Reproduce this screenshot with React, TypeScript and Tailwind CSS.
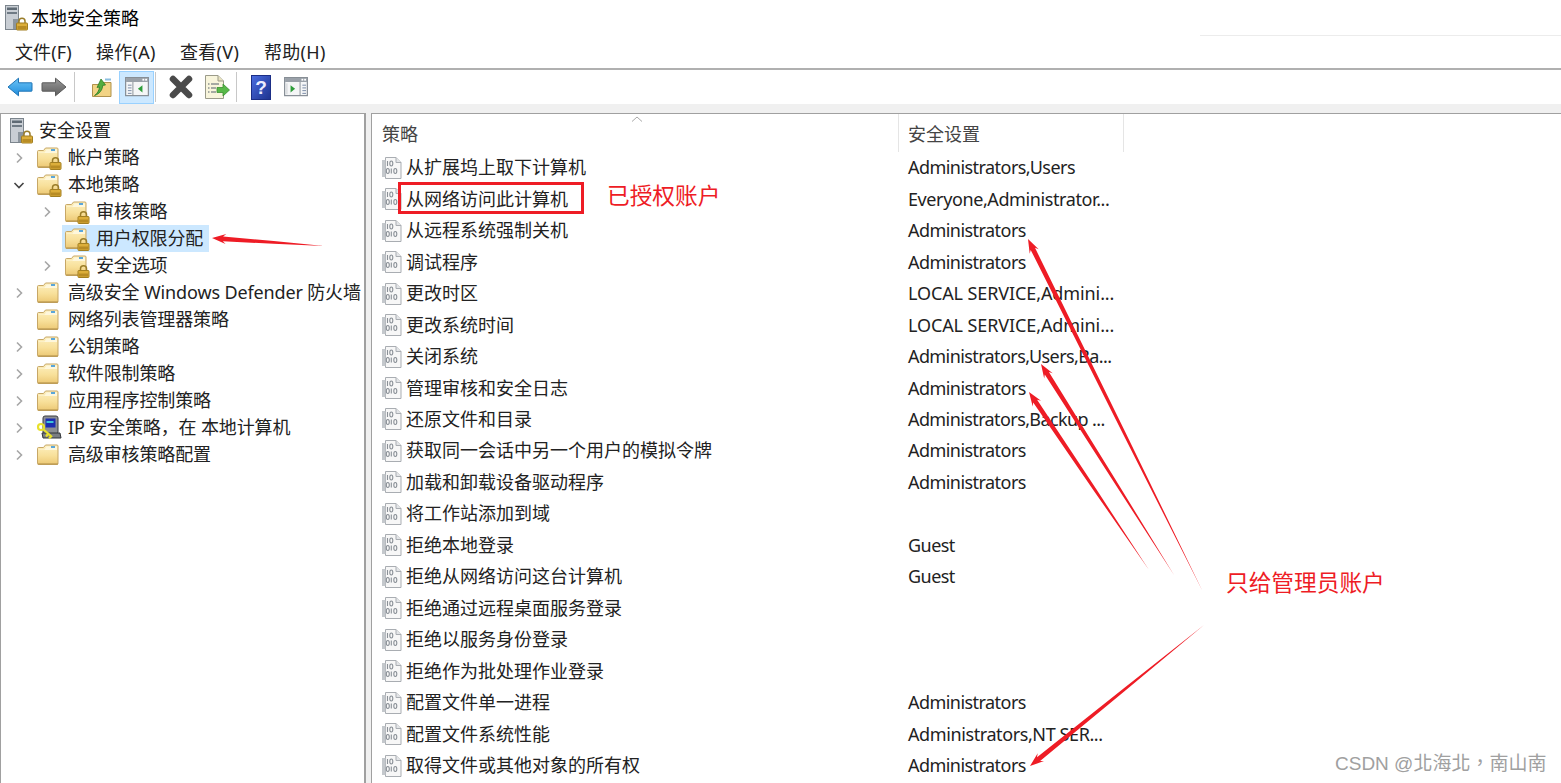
import React from "react";

const CJK = "font-['Noto_Sans','Noto_Sans_CJK_SC',sans-serif]";

function Defs() {
  return (
    <svg width="0" height="0" className="absolute">
      <defs>
        <linearGradient id="folderG" x1="0" y1="0" x2="0" y2="1">
          <stop offset="0" stopColor="#fdf0c0" />
          <stop offset=".55" stopColor="#f8e09a" />
          <stop offset="1" stopColor="#ecc874" />
        </linearGradient>
        <linearGradient id="blueG" x1="0" y1="0" x2="0" y2="1">
          <stop offset="0" stopColor="#6cc4f6" />
          <stop offset="1" stopColor="#1f8cdc" />
        </linearGradient>
        <linearGradient id="grayG" x1="0" y1="0" x2="0" y2="1">
          <stop offset="0" stopColor="#9a9a9a" />
          <stop offset="1" stopColor="#5e5e5e" />
        </linearGradient>
      </defs>
    </svg>
  );
}

function Lock({ x = 0, y = 0 }: { x?: number; y?: number }) {
  return (
    <g transform={`translate(${x} ${y})`}>
      <path d="M3 6V3.600C3 1.800 4.400 .8 6 .8s3 1 3 2.800V6" fill="none" stroke="#9a7d2a" strokeWidth="1.500" />
      <rect x=".5" y="5.500" width="11" height="7" rx=".8" fill="#dcae3a" stroke="#a27f22" />
      <rect x="1.500" y="8.500" width="9" height="3" fill="#b88c24" />
    </g>
  );
}

function ServerLock({ className = "" }: { className?: string }) {
  return (
    <svg width="26" height="26" viewBox="0 0 26 26" className={className}>
      <rect x="1.500" y=".5" width="13" height="24" fill="#c9ced4" stroke="#7c858d" />
      <rect x="3" y="2.500" width="10" height="2.500" fill="#5f6a74" />
      <rect x="3" y="7" width="10" height="2" fill="#6f7a84" />
      <rect x="9" y="14" width="5" height="10" fill="#8c959d" />
      <Lock x={12} y={12.5} />
    </svg>
  );
}

function Folder({ lock }: { lock?: boolean }) {
  return (
    <svg width="26" height="24" viewBox="0 0 26 24" className="shrink-0">
      <path d="M1.500 5.500V20.500c0 .6.4 1 1 1H21c.6 0 1-.4 1-1V3c0-.6-.4-1-1-1H9.500L7.500 4.500H2.500c-.6 0-1 .4-1 1Z" fill="url(#folderG)" stroke="#c7a766" />
      <path d="M2.500 6.500H8.500L10.500 3.500H21V7H2.500Z" fill="#fef7dc" />
      <rect x="15" y="3" width="4" height="2" fill="#5aa6da" />
      <path d="M2 21h20" stroke="#b8964f" strokeWidth="1.200" />
      {lock && <Lock x={13.5} y={11} />}
    </svg>
  );
}

function IpIcon() {
  return (
    <svg width="26" height="26" viewBox="0 0 26 26" className="shrink-0">
      <rect x="7" y="1" width="15" height="18" rx="2" fill="#8d9094" stroke="#3d3f42" />
      <rect x="9.500" y="3.500" width="10" height="9" fill="#1c2fb0" />
      <rect x="10.500" y="6" width="7" height="2" fill="#3dc5d8" />
      <path d="M6 18h18l1 5H7Z" fill="#7b7e82" stroke="#33363a" />
      <circle cx="5" cy="12" r="3" fill="none" stroke="#e8e12c" strokeWidth="2.200" />
      <path d="M7 14l9 8M12 19l-2 2.500M15 21.500l-2 2" stroke="#e8e12c" strokeWidth="2.200" fill="none" />
    </svg>
  );
}

function PolicyIcon() {
  return (
    <svg width="22" height="24" viewBox="0 0 22 24" className="shrink-0">
      <path d="M4.500 1.500H15L20 6.500V22.500H4.500Z" fill="#f7f7f7" stroke="#a9adb2" />
      <path d="M15 1.500V6.500H20" fill="#e3e5e8" stroke="#a9adb2" />
      <rect x="1" y="4" width="3.500" height="17" fill="#c4c8cc" />
      <g fill="none" stroke="#8a9097" strokeWidth="1.100">
        <path d="M6.500 5v5" />
        <ellipse cx="10.300" cy="7.500" rx="1.500" ry="2.500" />
        <ellipse cx="6.800" cy="15" rx="1.500" ry="2.500" />
        <path d="M10.300 12.500v5" />
        <ellipse cx="14.300" cy="15" rx="1.500" ry="2.500" />
      </g>
    </svg>
  );
}

function Chevron({ open }: { open?: boolean }) {
  return (
    <svg width="12" height="12" viewBox="0 0 12 12">
      {open ? (
        <path d="M1.500 4 6 8.500 10.500 4" fill="none" stroke="#444" strokeWidth="1.600" />
      ) : (
        <path d="M4 1.500 8.500 6 4 10.500" fill="none" stroke="#a6a6a6" strokeWidth="1.600" />
      )}
    </svg>
  );
}

function ArrowIcon({ fill, stroke, flip }: { fill: string; stroke: string; flip?: boolean }) {
  return (
    <svg width="26" height="20" viewBox="0 0 26 20" className={flip ? "-scale-x-100" : ""}>
      <path d="M1 10 11.500 1.200V5.800H24.500C25 5.800 25 6 25 6.500V13.500C25 14 25 14.200 24.500 14.200H11.500V18.800Z" fill={fill} stroke={stroke} strokeLinejoin="round" />
    </svg>
  );
}

function PaneIcon({ right }: { right?: boolean }) {
  return (
    <svg width="24" height="20" viewBox="0 0 26 22">
      <rect x=".5" y=".5" width="25" height="20" fill="#f5f6f7" stroke="#858c94" strokeWidth="1.300" />
      <rect x="1" y="1" width="24" height="4.500" fill="#9aa1a9" />
      <rect x="19" y="2" width="2" height="2" fill="#fff" />
      <rect x="22" y="2" width="2" height="2" fill="#fff" />
      <path d={right ? "M17.500 5.500V20.500" : "M8.500 5.500V20.500"} stroke="#858c94" />
      {right ? (
        <>
          <path d="M7 9l5 4-5 4Z" fill="#2f9d3b" />
          <path d="M20 9h4M20 12h4M20 15h4M20 18h4" stroke="#6f82a0" />
          <path d="M3 7v12" stroke="#c8ccd0" />
        </>
      ) : (
        <>
          <path d="M19 9l-5 4 5 4Z" fill="#2f9d3b" />
          <path d="M3 9h4M3 12h4M3 15h4M3 18h4" stroke="#6f82a0" />
        </>
      )}
    </svg>
  );
}

function Sep({ className }: { className: string }) {
  return <div className={`w-px h-[30px] bg-[#c8c8c8] ${className}`} />;
}

function Toolbar() {
  return (
    <div className="flex items-center h-[34px] pl-[7px]">
      <ArrowIcon fill="url(#blueG)" stroke="#1f74b5" />
      <div className="ml-[8px]">
        <ArrowIcon fill="url(#grayG)" stroke="#5a5a5a" flip />
      </div>
      <Sep className="ml-[7px]" />
      <svg width="24" height="26" viewBox="0 0 24 26" className="ml-[15px]">
        <path d="M2.500 10.500H10l2-2h9v14H2.500Z" fill="#f2d384" stroke="#b0924c" />
        <rect x="15" y="4.500" width="6" height="2" fill="#8dbfe0" />
        <path d="M4.500 21.500c3-2 4.500-5 5-8.500l-2.500 .5L11 5l4.500 6-2.800 .4C12.500 16 9.500 20 4.500 21.500Z" fill="#52ad3f" stroke="#2e7d24" strokeWidth=".8" />
      </svg>
      <div className="ml-[5px] w-[35px] h-[33px] bg-[#cce8ff] border border-[#99d1ff] flex items-center justify-center">
        <PaneIcon />
      </div>
      <Sep className="ml-[1px]" />
      <svg width="26" height="26" viewBox="0 0 26 26" className="ml-[12px]">
        <path d="M5 5 21 21M21 5 5 21" stroke="#4a4a4a" strokeWidth="6.500" strokeLinecap="round" />
      </svg>
      <svg width="26" height="26" viewBox="0 0 26 26" className="ml-[10px]">
        <path d="M1.500 1.500H14L19.500 7V24.500H1.500Z" fill="#f8f5dc" stroke="#9b9b8a" />
        <path d="M14 1.500V7H19.500" fill="#e8e3c0" stroke="#9b9b8a" />
        <path d="M4 10h1.500M7 10h8M4 14h1.500M7 14h5M4 18h1.500M7 18h5" stroke="#55606a" strokeWidth="1.200" />
        <path d="M13 13.500h6V10l6.500 6-6.500 6v-3.500h-6Z" fill="#58b948" stroke="#3a8f30" strokeWidth=".8" />
      </svg>
      <Sep className="ml-[6px]" />
      <div className="ml-[14px] w-[20px] h-[25px] bg-linear-to-br from-[#4a6ce0] to-[#1f3490] border border-[#1b2e86] flex items-center justify-center text-[#eef] font-bold text-[19px] leading-none font-['Liberation_Sans',sans-serif]">
        ?
      </div>
      <div className="ml-[13px]">
        <PaneIcon right />
      </div>
    </div>
  );
}

type TreeItem = { label: string; level: number; kind: "lock" | "folder" | "ip"; arrow?: "open" | "closed" | "none"; selected?: boolean };
const tree: TreeItem[] = [
  { label: "帐户策略", level: 1, kind: "lock" },
  { label: "本地策略", level: 1, kind: "lock", arrow: "open" },
  { label: "审核策略", level: 2, kind: "lock" },
  { label: "用户权限分配", level: 2, kind: "lock", arrow: "none", selected: true },
  { label: "安全选项", level: 2, kind: "lock" },
  { label: "高级安全 Windows Defender 防火墙", level: 1, kind: "folder" },
  { label: "网络列表管理器策略", level: 1, kind: "folder", arrow: "none" },
  { label: "公钥策略", level: 1, kind: "folder" },
  { label: "软件限制策略", level: 1, kind: "folder" },
  { label: "应用程序控制策略", level: 1, kind: "folder" },
  { label: "IP 安全策略，在 本地计算机", level: 1, kind: "ip" },
  { label: "高级审核策略配置", level: 1, kind: "folder" },
];

function Tree() {
  return (
    <div className="w-[366px] shrink-0 bg-white border-l border-t border-r-2 border-[#a0a0a0] pt-[3px] overflow-hidden">
      <div className="flex items-center h-[27px] pl-[8px] gap-[4px]">
        <ServerLock className="shrink-0" />
        <span className="text-[18px] text-[#222] whitespace-nowrap">安全设置</span>
      </div>
      {tree.map((t) => (
        <div key={t.label} className="flex items-center h-[27px] whitespace-nowrap">
          <div className={`flex items-center justify-center w-[12px] shrink-0 ${t.level === 1 ? "ml-[12px]" : "ml-[40px]"}`}>
            {t.arrow !== "none" && <Chevron open={t.arrow === "open"} />}
          </div>
          <div className={`flex items-center h-[27px] ml-[9px] pl-[2px] pr-[6px] ${t.selected ? "bg-[#cce8ff]" : ""}`}>
            <div className="mr-[6px] flex">
              {t.kind === "ip" ? <IpIcon /> : <Folder lock={t.kind === "lock"} />}
            </div>
            <span className="text-[18px] text-[#222] tracking-[-0.14px]">{t.label}</span>
          </div>
        </div>
      ))}
    </div>
  );
}

const rows: [string, string, string][] = [
  ["从扩展坞上取下计算机", "Administrators,Users", "tracking-[-0.55px]"],
  ["从网络访问此计算机", "Everyone,Administrator...", "tracking-[-0.4px]"],
  ["从远程系统强制关机", "Administrators", "tracking-[-0.55px]"],
  ["调试程序", "Administrators", "tracking-[-0.55px]"],
  ["更改时区", "LOCAL SERVICE,Admini...", "tracking-[-0.1px]"],
  ["更改系统时间", "LOCAL SERVICE,Admini...", "tracking-[-0.1px]"],
  ["关闭系统", "Administrators,Users,Ba...", "tracking-[-0.6px]"],
  ["管理审核和安全日志", "Administrators", "tracking-[-0.55px]"],
  ["还原文件和目录", "Administrators,Backup ...", "tracking-[-0.6px]"],
  ["获取同一会话中另一个用户的模拟令牌", "Administrators", "tracking-[-0.55px]"],
  ["加载和卸载设备驱动程序", "Administrators", "tracking-[-0.55px]"],
  ["将工作站添加到域", "", ""],
  ["拒绝本地登录", "Guest", "tracking-[-0.55px]"],
  ["拒绝从网络访问这台计算机", "Guest", "tracking-[-0.55px]"],
  ["拒绝通过远程桌面服务登录", "", ""],
  ["拒绝以服务身份登录", "", ""],
  ["拒绝作为批处理作业登录", "", ""],
  ["配置文件单一进程", "Administrators", "tracking-[-0.55px]"],
  ["配置文件系统性能", "Administrators,NT SER...", "tracking-[-0.4px]"],
  ["取得文件或其他对象的所有权", "Administrators", "tracking-[-0.55px]"],
];

function List() {
  return (
    <div className="flex-1 ml-[5px] bg-white border-l border-t border-[#a0a0a0] overflow-hidden">
      <div className="relative flex h-[38px] text-[18px] text-[#444]">
        <div className="w-[527px] pl-[10px] pt-[2px] flex items-center border-r border-[#e5e5e5]">策略</div>
        <div className="w-[225px] pl-[9px] pt-[2px] flex items-center border-r border-[#e5e5e5]">安全设置</div>
        <svg width="12" height="6" viewBox="0 0 12 6" className="absolute left-[259px] top-[2px]">
          <path d="M1 5.500 6 1l5 4.500" fill="none" stroke="#a8a8a8" />
        </svg>
      </div>
      {rows.map(([a, b, track]) => (
        <div key={a} className="flex items-center h-[31.47px] text-[18px] text-[#222] whitespace-nowrap">
          <div className="w-[527px] flex items-center pl-[9px] gap-[3px]">
            <PolicyIcon />
            <span>{a}</span>
          </div>
          <div className={`pl-[9px] ${track}`}>{b}</div>
        </div>
      ))}
    </div>
  );
}

function Taper({ tail, head, w = 5 }: { tail: [number, number]; head: [number, number]; w?: number }) {
  const [x1, y1] = tail;
  const [x2, y2] = head;
  const len = Math.hypot(x2 - x1, y2 - y1);
  const ux = (x2 - x1) / len;
  const uy = (y2 - y1) / len;
  const nx = -uy;
  const ny = ux;
  const at = (d: number, off: number) => {
    const x = x2 - ux * d + nx * off;
    const y = y2 - uy * d + ny * off;
    return `${x.toFixed(1)},${y.toFixed(1)}`;
  };
  const mid = len * 0.55;
  const pts = [
    `${x1},${y1}`,
    at(mid, 1.4),
    at(11, 2.4),
    at(14, w),
    at(0, 0),
    at(14, -w),
    at(11, -2.4),
    at(mid, -1.4),
  ].join(" ");
  return <polygon points={pts} fill="#ee1c25" />;
}

export default function App() {
  return (
    <div className={`relative w-[1561px] h-[783px] overflow-hidden bg-[#f0f0f0] flex flex-col ${CJK}`}>
      <Defs />
      <div className="flex items-center h-[36px] bg-white pl-[4px] gap-[1px] shrink-0">
        <ServerLock />
        <span className="text-[18px] text-black">本地安全策略</span>
      </div>
      <div className="flex items-center h-[32px] bg-white pl-[15px] text-[18px] text-[#222] shrink-0 border-b-2 border-[#b0b0b0] box-content">
        <span className="w-[81px] tracking-[0.1px]">文件(F)</span>
        <span className="w-[84px] tracking-[0.3px]">操作(A)</span>
        <span className="w-[84px] tracking-[0.3px]">查看(V)</span>
        <span className="tracking-[0.3px]">帮助(H)</span>
      </div>
      <div className="bg-white shrink-0">
        <Toolbar />
      </div>
      <div className="h-[9px] shrink-0" />
      <div className="flex flex-1 min-h-0">
        <Tree />
        <List />
      </div>

      <div className="absolute left-[1200px] top-[35px] w-[361px] h-px bg-[#ececec]" />
      <div className="absolute left-[398px] top-[182px] w-[186px] h-[32px] border-[3px] border-[#ee1c25]" />
      <div className="absolute left-[607px] top-[180px] text-[22.7px] leading-[32px] text-[#ee1c25]">已授权账户</div>
      <div className="absolute left-[1226px] top-[567px] text-[22.7px] leading-[32px] text-[#ee1c25]">只给管理员账户</div>
      <div className="absolute left-[1335px] top-[750px] text-[19px] leading-[28px] text-[#a0a0a0] whitespace-nowrap font-['Liberation_Sans','Noto_Sans_CJK_TC',sans-serif]">CSDN @北海北，南山南</div>
      <svg width="1561" height="783" viewBox="0 0 1561 783" className="absolute left-0 top-0 pointer-events-none">
        <Taper tail={[324, 246]} head={[212, 238]} />
        <Taper tail={[1202, 590]} head={[1028, 239]} />
        <Taper tail={[1174, 575]} head={[1041, 364]} />
        <Taper tail={[1149, 570]} head={[1029, 392]} />
        <Taper tail={[1204, 625]} head={[1030, 766]} />
      </svg>
    </div>
  );
}
